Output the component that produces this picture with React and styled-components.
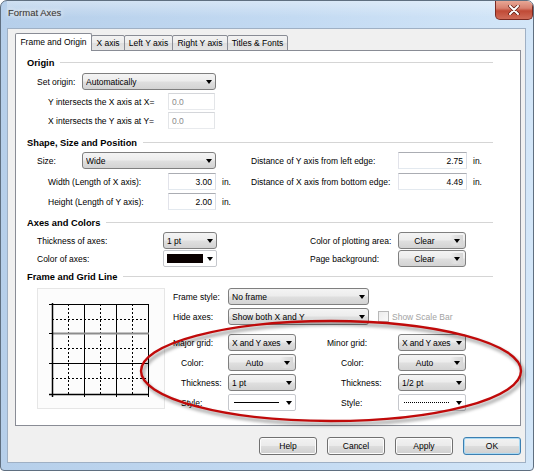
import React from "react";
import styled, { createGlobalStyle } from "styled-components";

const GlobalStyle = createGlobalStyle`
  html, body {
    margin: 0;
    padding: 0;
    background: #ffffff;
  }
  body {
    font-family: "Liberation Sans", Arial, sans-serif;
    font-size: 8.5px;
    color: #000;
  }
`;

const Window = styled.div`
  position: relative;
  box-sizing: border-box;
  width: 534px;
  height: 471px;
  border: 1px solid #5f6f80;
  border-radius: 7px 7px 4px 4px;
  padding: 0 7px 7px 6px;
  background: linear-gradient(to right, #b6cfea 0%, #c3daf2 55%, #d3e6f8 100%);
  display: flex;
  flex-direction: column;
  overflow: hidden;
`;

const TitleBar = styled.div`
  height: 27px;
  margin-right: -7px;
  display: flex;
  align-items: flex-start;
  justify-content: space-between;
  background: linear-gradient(to bottom, rgba(255, 255, 255, 0.35), rgba(255, 255, 255, 0) 60%);
`;

const Title = styled.span`
  margin-top: 6px;
  margin-left: 1px;
  font-size: 9.5px;
  color: #3a3a3a;
  text-shadow: 0 0 4px #fff, 0 0 6px #fff, 0 0 1px #888;
`;

const CloseButton = styled.div`
  width: 38px;
  height: 19px;
  box-sizing: border-box;
  border: 1px solid #7a2a22;
  border-top: none;
  border-radius: 0 0 5px 5px;
  background: linear-gradient(to bottom, #e8a795 0%, #d7806f 40%, #c04a36 55%, #cf6b58 100%);
  display: flex;
  align-items: center;
  justify-content: center;
`;

const Client = styled.div`
  flex: 1;
  box-sizing: border-box;
  border: 1px solid #9fb0c4;
  background: #f0f0f0;
  padding: 4px 0 0 7px;
  display: flex;
  flex-direction: column;
`;

const TabStrip = styled.div`
  display: flex;
  align-items: flex-end;
  height: 18px;
  position: relative;
  z-index: 1;
`;

const Tab = styled.div`
  box-sizing: border-box;
  width: ${(p) => p.$w}px;
  height: ${(p) => (p.$active ? 18 : 16)}px;
  margin-right: -1px;
  border: 1px solid #898c95;
  border-bottom: ${(p) => (p.$active ? "none" : "1px solid #898c95")};
  border-radius: 2px 2px 0 0;
  background: ${(p) =>
    p.$active ? "#ffffff" : "linear-gradient(to bottom, #f3f3f3, #ebebeb 50%, #dedede 50%, #e5e5e5)"};
  display: flex;
  align-items: center;
  justify-content: center;
  white-space: nowrap;
  padding-bottom: ${(p) => (p.$active ? 1 : 0)}px;
`;

const Panel = styled.div`
  box-sizing: border-box;
  width: 506px;
  height: 376px;
  margin-top: -1px;
  border: 1px solid #898c95;
  background: #ffffff;
  padding: 5px 27px 0 0;
  display: flex;
  flex-direction: column;
`;

const SectionHeader = styled.div`
  height: 13px;
  margin-left: 11px;
  margin-top: ${(p) => p.$mt || 0}px;
  display: flex;
  align-items: center;
  font-size: 9.3px;
  font-weight: bold;
  white-space: nowrap;

  &::after {
    content: "";
    flex: 1;
    height: 1px;
    margin-left: 6px;
    background: #d5d5d5;
  }
`;

const Row = styled.div`
  display: flex;
  align-items: center;
  height: 17px;
  margin-top: ${(p) => (p.$mt === undefined ? 3 : p.$mt)}px;
  padding-left: ${(p) => (p.$indent === undefined ? 21 : p.$indent)}px;
`;

const Group = styled.div`
  flex: none;
  box-sizing: border-box;
  display: flex;
  align-items: center;
  width: ${(p) => (p.$w ? `${p.$w}px` : "auto")};
  padding-left: ${(p) => p.$indent || 0}px;
`;

const Label = styled.span`
  flex: none;
  width: ${(p) => (p.$w ? `${p.$w}px` : "auto")};
  white-space: nowrap;
  color: ${(p) => (p.$muted ? "#a3a3a3" : "#000")};
`;

const Unit = styled.span`
  margin-left: 6px;
`;

const Field = styled.div`
  flex: none;
  box-sizing: border-box;
  width: ${(p) => p.$w}px;
  height: 17px;
  border: 1px solid;
  border-color: ${(p) =>
    p.$disabled ? "#d4d6da #e3e5e8 #e8eaed #e3e5e8" : "#abadb3 #dbdfe6 #e3e9ef #e2e3ea"};
  background: #ffffff;
  display: flex;
  align-items: center;
  justify-content: ${(p) => (p.$disabled ? "flex-start" : "flex-end")};
  padding: 0 3px 0 3px;
  color: ${(p) => (p.$disabled ? "#8a8a8a" : "#000")};
`;

const Combo = styled.div`
  flex: none;
  box-sizing: border-box;
  width: ${(p) => p.$w}px;
  height: 17px;
  border: 1px solid ${(p) => (p.$flat ? "#c5c7cc" : "#7f7f7f")};
  border-radius: ${(p) => (p.$flat ? 2 : 3)}px;
  background: ${(p) =>
    p.$flat
      ? "#ffffff"
      : "linear-gradient(to bottom, #f4f4f4 0%, #ececec 48%, #dfdfdf 52%, #d3d3d3 100%)"};
  display: flex;
  align-items: center;
  padding-left: ${(p) => (p.$center ? 0 : 3)}px;
`;

const ComboText = styled.span`
  flex: 1;
  min-width: 0;
  white-space: nowrap;
  overflow: hidden;
  text-align: ${(p) => (p.$center ? "center" : "left")};
  letter-spacing: ${(p) => (p.$tight ? "-0.15px" : "0")};
`;

const Arrow = styled.span`
  flex: none;
  width: 13px;
  height: 100%;
  display: flex;
  align-items: center;
  justify-content: center;

  &::after {
    content: "";
    border-left: 3px solid transparent;
    border-right: 3px solid transparent;
    border-top: 4px solid #000;
  }
`;

const ArrowBox = styled(Arrow)`
  width: 13px;
  height: 11px;
  margin-right: 2px;
  background: linear-gradient(to right, rgba(255, 255, 255, 0), #e2e2e2 40%, #d6d6d6);
`;

const Swatch = styled.span`
  flex: 1;
  height: 9px;
  background: ${(p) => p.$color};
`;

const LinePreview = styled.span`
  flex: 1;
  margin: 0 3px 0 2px;
  border-top: ${(p) => (p.$dotted ? "1px dotted #000" : "1.5px solid #000")};
`;

const FrameBody = styled.div`
  display: flex;
  margin-top: 5px;
  padding-left: 21px;
`;

const ChartBox = styled.div`
  flex: none;
  box-sizing: border-box;
  width: 128px;
  height: 121px;
  border: 1px solid #e6e6e6;
  background: #fcfcfc;
`;

const Controls = styled.div`
  margin-left: 8px;
  display: flex;
  flex-direction: column;
`;

const CheckBox = styled.span`
  flex: none;
  box-sizing: border-box;
  width: 11px;
  height: 11px;
  margin: 0 3px 0 9px;
  border: 1px solid #b8b8b8;
  background: linear-gradient(135deg, #ececec, #fafafa);
`;

const ButtonRow = styled.div`
  width: 506px;
  display: flex;
  justify-content: flex-end;
  gap: 10px;
  margin-top: 11px;
`;

const Button = styled.div`
  box-sizing: border-box;
  width: 58px;
  height: 18px;
  border: 1px solid ${(p) => (p.$default ? "#3c7fb1" : "#707070")};
  border-radius: 3px;
  background: linear-gradient(to bottom, #f2f2f2 0%, #ebebeb 48%, #dddddd 52%, #cfcfcf 100%);
  box-shadow: ${(p) => (p.$default ? "inset 0 0 0 1px #a9d9f3" : "inset 0 0 0 1px #fcfcfc")};
  display: flex;
  align-items: center;
  justify-content: center;
`;

const Overlay = styled.svg`
  position: absolute;
  left: -1px;
  top: -1px;
  pointer-events: none;
`;

function Select({ w, children, center, flat, boxed, tight }) {
  return (
    <Combo $w={w} $center={center} $flat={flat}>
      {typeof children === "string" ? (
        <ComboText $center={center} $tight={tight}>
          {children}
        </ComboText>
      ) : (
        children
      )}
      {boxed ? <ArrowBox /> : <Arrow />}
    </Combo>
  );
}

function GridPreview() {
  const dotted = { stroke: "#000", strokeWidth: 1, strokeDasharray: "2 2" };
  const solid = { stroke: "#000", strokeWidth: 1 };
  return (
    <svg width="126" height="119" viewBox="1 1 126 119">
      {[31, 63, 95].map((x) => (
        <line key={"v" + x} x1={x + 0.5} y1={16} x2={x + 0.5} y2={106} {...dotted} />
      ))}
      {[31, 60, 90].map((y) => (
        <line key={"h" + y} x1={15} y1={y + 0.5} x2={111} y2={y + 0.5} {...dotted} />
      ))}
      {[47, 79, 111].map((x) => (
        <line key={"s" + x} x1={x + 0.5} y1={16} x2={x + 0.5} y2={109} {...solid} />
      ))}
      <line x1={12} y1={16.5} x2={112} y2={16.5} {...solid} />
      <line x1={12} y1={75.5} x2={112} y2={75.5} {...solid} />
      <line x1={15} y1={45.5} x2={112} y2={45.5} stroke="#8c8c8c" strokeWidth="2" />
      <line x1={12} y1={45.5} x2={15} y2={45.5} {...solid} />
      <line x1={15.5} y1={15} x2={15.5} y2={109} stroke="#000" strokeWidth="1.5" />
      <line x1={12} y1={106.5} x2={112} y2={106.5} stroke="#000" strokeWidth="1.5" />
    </svg>
  );
}

export default function App() {
  return (
    <>
      <GlobalStyle />
      <Window>
        <TitleBar>
          <Title>Format Axes</Title>
          <CloseButton>
            <svg width="12" height="10" viewBox="0 0 12 10">
              <path d="M2 1 L10 9 M10 1 L2 9" stroke="#5a1a12" strokeWidth="3.4" strokeLinecap="round" />
              <path d="M2 1 L10 9 M10 1 L2 9" stroke="#ffffff" strokeWidth="2" strokeLinecap="round" />
            </svg>
          </CloseButton>
        </TitleBar>

        <Client>
          <TabStrip>
            <Tab $w={77} $active>Frame and Origin</Tab>
            <Tab $w={34}>X axis</Tab>
            <Tab $w={49}>Left Y axis</Tab>
            <Tab $w={56}>Right Y axis</Tab>
            <Tab $w={61}>Titles &amp; Fonts</Tab>
          </TabStrip>

          <Panel>
            <SectionHeader>Origin</SectionHeader>
            <Row $mt={4}>
              <Label $w={45}>Set origin:</Label>
              <Select w={134}>Automatically</Select>
            </Row>
            <Row $indent={32}>
              <Label $w={120}>Y intersects the X axis at X=</Label>
              <Field $w={47} $disabled>0.0</Field>
            </Row>
            <Row $mt={2} $indent={32}>
              <Label $w={120}>X intersects the Y axis at Y=</Label>
              <Field $w={47} $disabled>0.0</Field>
            </Row>

            <SectionHeader $mt={7}>Shape, Size and Position</SectionHeader>
            <Row>
              <Group $w={214}>
                <Label $w={45}>Size:</Label>
                <Select w={134}>Wide</Select>
              </Group>
              <Group>
                <Label $w={147}>Distance of Y axis from left edge:</Label>
                <Field $w={69}>2.75</Field>
                <Unit>in.</Unit>
              </Group>
            </Row>
            <Row $mt={4}>
              <Group $w={214} $indent={11}>
                <Label $w={120}>Width (Length of X axis):</Label>
                <Field $w={48}>3.00</Field>
                <Unit>in.</Unit>
              </Group>
              <Group>
                <Label $w={147}>Distance of X axis from bottom edge:</Label>
                <Field $w={69}>4.49</Field>
                <Unit>in.</Unit>
              </Group>
            </Row>
            <Row>
              <Group $w={214} $indent={11}>
                <Label $w={120}>Height (Length of Y axis):</Label>
                <Field $w={48}>2.00</Field>
                <Unit>in.</Unit>
              </Group>
            </Row>

            <SectionHeader $mt={6}>Axes and Colors</SectionHeader>
            <Row>
              <Group $w={273}>
                <Label $w={126}>Thickness of axes:</Label>
                <Select w={54}>1 pt</Select>
              </Group>
              <Group>
                <Label $w={88}>Color of plotting area:</Label>
                <Select w={68} center boxed>Clear</Select>
              </Group>
            </Row>
            <Row $mt={1}>
              <Group $w={273}>
                <Label $w={126}>Color of axes:</Label>
                <Select w={54} flat>
                  <Swatch $color="#0a0000" />
                </Select>
              </Group>
              <Group>
                <Label $w={88}>Page background:</Label>
                <Select w={68} center boxed>Clear</Select>
              </Group>
            </Row>

            <SectionHeader $mt={3}>Frame and Grid Line</SectionHeader>
            <FrameBody>
              <ChartBox>
                <GridPreview />
              </ChartBox>
              <Controls>
                <Row $mt={0} $indent={0}>
                  <Label $w={55}>Frame style:</Label>
                  <Select w={141}>No frame</Select>
                </Row>
                <Row $indent={0}>
                  <Label $w={55}>Hide axes:</Label>
                  <Select w={141}>Show both X and Y</Select>
                  <CheckBox />
                  <Label $muted>Show Scale Bar</Label>
                </Row>
                <Row $mt={9} $indent={0}>
                  <Group $w={154}>
                    <Label $w={55}>Major grid:</Label>
                    <Select w={68} tight>X and Y axes</Select>
                  </Group>
                  <Label $w={71}>Minor grid:</Label>
                  <Select w={68} tight>X and Y axes</Select>
                </Row>
                <Row $indent={0}>
                  <Group $w={154} $indent={8}>
                    <Label $w={47}>Color:</Label>
                    <Select w={68} center boxed>Auto</Select>
                  </Group>
                  <Group $indent={14}>
                    <Label $w={57}>Color:</Label>
                    <Select w={68} center boxed>Auto</Select>
                  </Group>
                </Row>
                <Row $indent={0}>
                  <Group $w={154} $indent={8}>
                    <Label $w={47}>Thickness:</Label>
                    <Select w={68}>1 pt</Select>
                  </Group>
                  <Group $indent={14}>
                    <Label $w={57}>Thickness:</Label>
                    <Select w={68}>1/2 pt</Select>
                  </Group>
                </Row>
                <Row $indent={0}>
                  <Group $w={154} $indent={8}>
                    <Label $w={47}>Style:</Label>
                    <Select w={68} flat>
                      <LinePreview />
                    </Select>
                  </Group>
                  <Group $indent={14}>
                    <Label $w={57}>Style:</Label>
                    <Select w={68} flat>
                      <LinePreview $dotted />
                    </Select>
                  </Group>
                </Row>
              </Controls>
            </FrameBody>
          </Panel>

          <ButtonRow>
            <Button>Help</Button>
            <Button>Cancel</Button>
            <Button>Apply</Button>
            <Button $default>OK</Button>
          </ButtonRow>
        </Client>

        <Overlay width="534" height="471" viewBox="0 0 534 471">
          <defs>
            <filter id="soft" x="-10%" y="-30%" width="120%" height="160%">
              <feGaussianBlur stdDeviation="1.6" />
            </filter>
          </defs>
          <ellipse
            cx="333"
            cy="374"
            rx="190"
            ry="50"
            fill="none"
            stroke="rgba(0,0,0,0.28)"
            strokeWidth="4"
            filter="url(#soft)"
          />
          <ellipse cx="331" cy="371" rx="190" ry="50" fill="none" stroke="#c00a0a" strokeWidth="2.4" />
        </Overlay>
      </Window>
    </>
  );
}
